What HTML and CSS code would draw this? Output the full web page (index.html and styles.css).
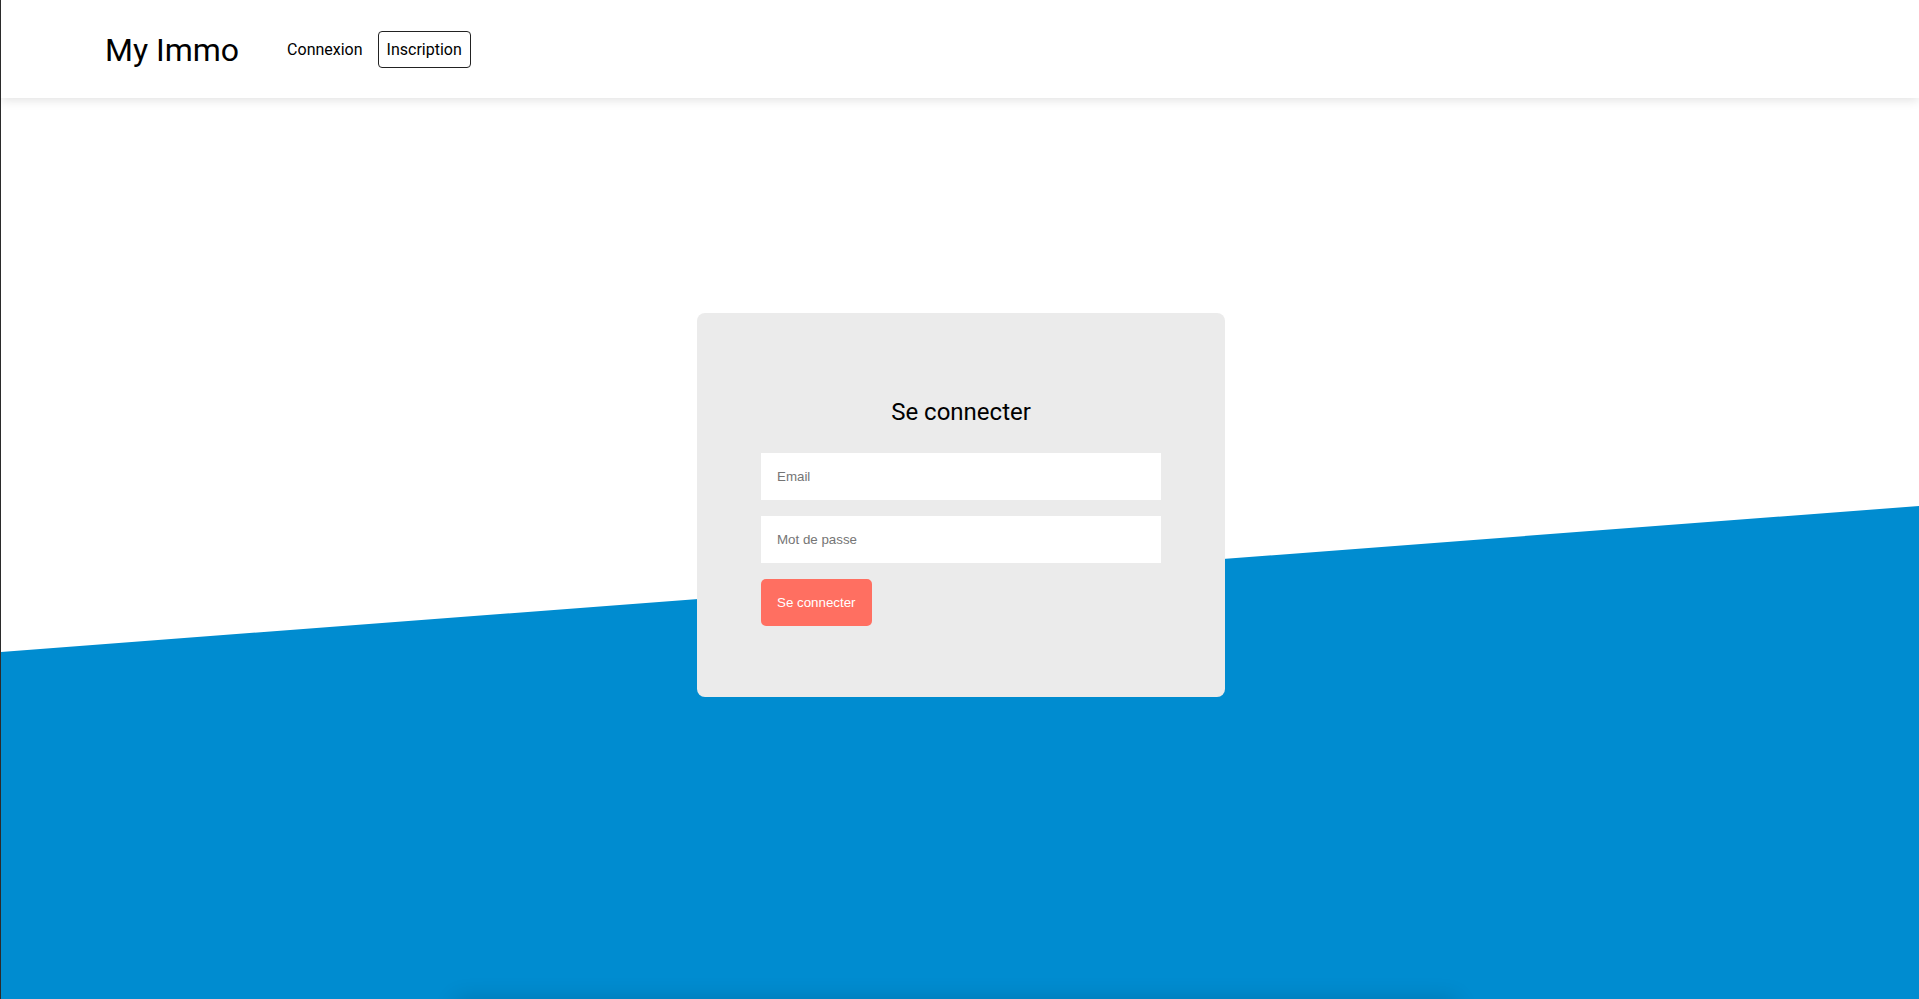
FILE: index.html
```html
<!DOCTYPE html>
<html lang="fr">
<head>
<meta charset="utf-8">
<title>My Immo</title>
<link rel="stylesheet" href="styles.css">
</head>
<body>
<header class="topbar">
  <a class="brand" href="#">My Immo</a>
  <nav class="nav">
    <a class="nav-link" href="#">Connexion</a>
    <a class="nav-link nav-outline" href="#">Inscription</a>
  </nav>
</header>
<main class="hero">
  <form class="card">
    <h1 class="card-title">Se connecter</h1>
    <input class="field" type="email" placeholder="Email">
    <input class="field" type="password" placeholder="Mot de passe">
    <div class="actions">
      <button class="btn" type="button">Se connecter</button>
    </div>
  </form>
</main>
<footer class="footer"></footer>
</body>
</html>
```
FILE: styles.css
```css
* { box-sizing: border-box; }
html, body { margin: 0; padding: 0; }
body {
  font-family: Roboto, "Liberation Sans", Arial, sans-serif;
  color: #000;
  background: #fff;
  border-left: 1px solid #2b2b2b;
  overflow: hidden;
}
.topbar {
  position: relative;
  z-index: 2;
  height: 98px;
  display: flex;
  align-items: center;
  padding-left: 104px;
  background: #fff;
  box-shadow: 0 2px 10px rgba(0, 0, 0, 0.12);
}
.brand {
  font-size: 32px;
  color: #000;
  text-decoration: none;
  line-height: 1;
  margin-top: 2px;
}
.nav {
  display: flex;
  align-items: center;
  gap: 15px;
  margin-left: 48px;
}
.nav-link {
  font-size: 16px;
  color: #000;
  text-decoration: none;
  line-height: 19px;
}
.nav-outline {
  border: 1px solid #222;
  border-radius: 4px;
  padding: 8px 8px;
}
.hero {
  position: relative;
  height: 901px;
  display: flex;
  justify-content: center;
  align-items: flex-start;
  padding-top: 215px;
  padding-left: 2px;
}
.hero::before {
  content: "";
  position: absolute;
  inset: 0;
  background: #008cd0;
  clip-path: polygon(0 554px, 100% 408px, 100% 100%, 0 100%);
}
.card {
  position: relative;
  width: 528px;
  height: 384px;
  background: #ebebeb;
  border-radius: 8px;
  padding: 85px 64px 0;
  display: flex;
  flex-direction: column;
  gap: 16px;
}
.card-title {
  margin: 0 0 11px;
  font-size: 24px;
  font-weight: 400;
  text-align: center;
  line-height: 28px;
}
.field {
  display: block;
  width: 100%;
  height: 47px;
  border: none;
  background: #fff;
  padding: 0 16px;
  font-family: "Liberation Sans", Arial, sans-serif;
  font-size: 13.33px;
  outline: none;
}
.field::placeholder { color: #757575; }
.actions { display: flex; }
.btn {
  height: 47px;
  padding: 0 16px;
  border: none;
  border-radius: 5px;
  background: #ff6f61;
  color: #fff;
  font-family: "Liberation Sans", Arial, sans-serif;
  font-size: 13.33px;
}
.footer {
  position: relative;
  z-index: 1;
  width: 1000px;
  height: 60px;
  margin: 0 auto;
  box-shadow: 0 0 22px rgba(0, 0, 0, 0.15);
  background: #008cd0;
  transform: translateX(-4px);
}
```
